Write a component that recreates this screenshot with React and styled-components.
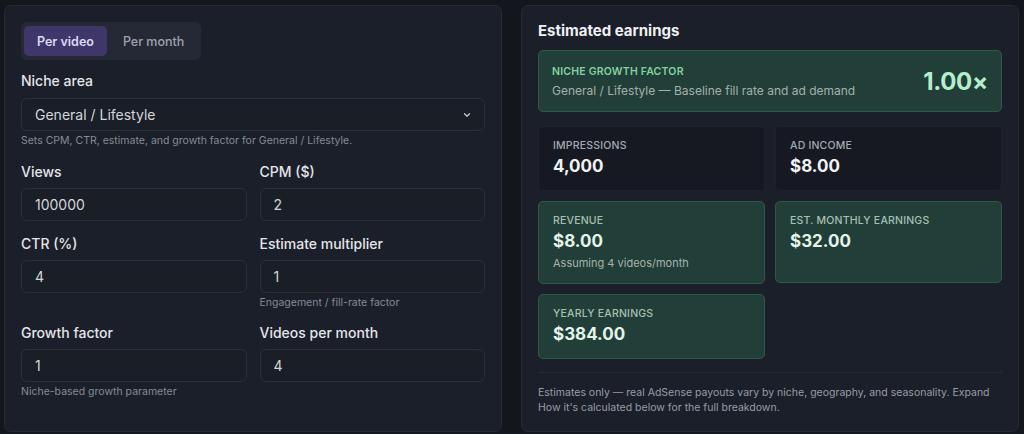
import styled, { createGlobalStyle } from "styled-components";

const GlobalStyle = createGlobalStyle`
  html, body {
    margin: 0;
    padding: 0;
    background: #13161d;
    font-family: Inter, "Noto Sans", sans-serif;
    color: #e4e6eb;
  }
  * { box-sizing: border-box; }
`;

const Page = styled.div`
  display: grid;
  grid-template-columns: 1fr 1fr;
  gap: 19px;
  padding: 5px 5px 5px 4px;
  height: 434px;
`;

const Panel = styled.section`
  background: #1b1f29;
  border: 1px solid #252a35;
  border-radius: 7px;
  padding: 16px;
  display: flex;
  flex-direction: column;
`;

const Toggle = styled.div`
  display: flex;
  align-self: flex-start;
  gap: 2px;
  padding: 4px 3px;
  background: #252935;
  border-radius: 6px;
  margin-bottom: 12px;
`;

const ToggleButton = styled.button`
  height: 30px;
  padding: 0 ${p => (p.$active ? 13 : 14)}px;
  border: none;
  border-radius: 5px;
  font-family: inherit;
  font-size: 12.5px;
  font-weight: ${p => (p.$active ? 600 : 500)};
  background: ${p => (p.$active ? "#3f3769" : "transparent")};
  color: ${p => (p.$active ? "#dcd8f6" : "#9ea2ad")};
`;

const Field = styled.div`
  display: flex;
  flex-direction: column;
`;

const Label = styled.label`
  font-size: 14px;
  font-weight: 500;
  line-height: 18px;
  color: #e3e5ea;
  margin-bottom: ${p => (p.$gap ? p.$gap : 7)}px;
`;

const Input = styled.div`
  height: 33px;
  display: flex;
  align-items: center;
  justify-content: space-between;
  padding: 0 12px 0 13px;
  border: 1px solid #2a2f3a;
  border-radius: 6px;
  background: #1a1e27;
  font-size: 14px;
  color: #d3d6dc;
`;

const Help = styled.div`
  font-size: 10.5px;
  line-height: 14px;
  margin-top: 3px;
  color: #858a95;
`;

const FieldGrid = styled.div`
  display: grid;
  grid-template-columns: 1fr 1fr;
  column-gap: 13px;
  row-gap: 14px;
  margin-top: 15px;
  align-items: start;
`;

const Heading = styled.h2`
  margin: 0 0 11px;
  font-size: 15px;
  line-height: 17px;
  font-weight: 700;
  color: #eef0f3;
`;

const NicheBox = styled.div`
  display: flex;
  align-items: center;
  justify-content: space-between;
  height: 62px;
  padding: 0 13px 0 13px;
  background: #223e38;
  border: 1px solid #2e5a4b;
  border-radius: 5px;
  margin-bottom: 14px;
`;

const NicheLabel = styled.div`
  font-size: 10.5px;
  font-weight: 600;
  letter-spacing: 0.2px;
  line-height: 13px;
  color: #84d2a2;
  margin-bottom: 5px;
`;

const NicheDesc = styled.div`
  font-size: 12px;
  line-height: 15px;
  color: #a3b1ac;
`;

const NicheValue = styled.div`
  font-size: 24px;
  font-weight: 700;
  color: #b4efca;
  letter-spacing: -0.3px;
`;

const Cards = styled.div`
  display: grid;
  grid-template-columns: 1fr 1fr;
  gap: 10px;
  align-items: start;
`;

const Card = styled.div`
  padding: 12px 14px 13px;
  border-radius: 5px;
  background: ${p => (p.$green ? "#223e38" : "#161922")};
  border: 1px solid ${p => (p.$green ? "#2d5849" : "#1e222c")};
  min-height: ${p => p.$h}px;
`;

const CardLabel = styled.div`
  font-size: 10.5px;
  font-weight: 500;
  letter-spacing: 0.2px;
  line-height: 13px;
  color: ${p => (p.$green ? "#a6c0b4" : "#a5a9b3")};
  margin-bottom: 3px;
`;

const CardValue = styled.div`
  font-size: 17px;
  font-weight: 700;
  line-height: 22px;
  color: ${p => (p.$green ? "#e4f4ea" : "#f1f2f5")};
`;

const CardSub = styled.div`
  font-size: 11px;
  line-height: 14px;
  margin-top: 4px;
  color: #a3b4ad;
`;

const Divider = styled.hr`
  border: none;
  border-top: 1px solid #262b35;
  margin: 13px 0 12px;
`;

const Note = styled.p`
  margin: 0;
  font-size: 10.5px;
  line-height: 15px;
  color: #979ca7;
`;

function Chevron() {
  return (
    <svg width="10" height="10" viewBox="0 0 24 24" fill="none" stroke="#c4c8cf" strokeWidth="3" strokeLinecap="round" strokeLinejoin="round">
      <path d="m6 9 6 6 6-6" />
    </svg>
  );
}

const fields = [
  { label: "Views", value: "100000" },
  { label: "CPM ($)", value: "2" },
  { label: "CTR (%)", value: "4" },
  { label: "Estimate multiplier", value: "1", help: "Engagement / fill-rate factor" },
  { label: "Growth factor", value: "1", help: "Niche-based growth parameter" },
  { label: "Videos per month", value: "4" },
];

export default function App() {
  return (
    <>
      <GlobalStyle />
      <Page>
        <Panel>
          <Toggle>
            <ToggleButton $active>Per video</ToggleButton>
            <ToggleButton>Per month</ToggleButton>
          </Toggle>
          <Field>
            <Label $gap={8}>Niche area</Label>
            <Input>
              General / Lifestyle
              <Chevron />
            </Input>
            <Help>Sets CPM, CTR, estimate, and growth factor for General / Lifestyle.</Help>
          </Field>
          <FieldGrid>
            {fields.map(f => (
              <Field key={f.label}>
                <Label>{f.label}</Label>
                <Input>{f.value}</Input>
                {f.help && <Help>{f.help}</Help>}
              </Field>
            ))}
          </FieldGrid>
        </Panel>

        <Panel>
          <Heading>Estimated earnings</Heading>
          <NicheBox>
            <div>
              <NicheLabel>NICHE GROWTH FACTOR</NicheLabel>
              <NicheDesc>General / Lifestyle — Baseline fill rate and ad demand</NicheDesc>
            </div>
            <NicheValue>1.00×</NicheValue>
          </NicheBox>
          <Cards>
            <Card $h={63}>
              <CardLabel>IMPRESSIONS</CardLabel>
              <CardValue>4,000</CardValue>
            </Card>
            <Card $h={63}>
              <CardLabel>AD INCOME</CardLabel>
              <CardValue>$8.00</CardValue>
            </Card>
            <Card $green $h={82}>
              <CardLabel $green>REVENUE</CardLabel>
              <CardValue $green>$8.00</CardValue>
              <CardSub>Assuming 4 videos/month</CardSub>
            </Card>
            <Card $green $h={82}>
              <CardLabel $green>EST. MONTHLY EARNINGS</CardLabel>
              <CardValue $green>$32.00</CardValue>
            </Card>
            <Card $green $h={65}>
              <CardLabel $green>YEARLY EARNINGS</CardLabel>
              <CardValue $green>$384.00</CardValue>
            </Card>
          </Cards>
          <Divider />
          <Note>
            Estimates only — real AdSense payouts vary by niche, geography, and seasonality. Expand
            How it's calculated below for the full breakdown.
          </Note>
        </Panel>
      </Page>
    </>
  );
}
